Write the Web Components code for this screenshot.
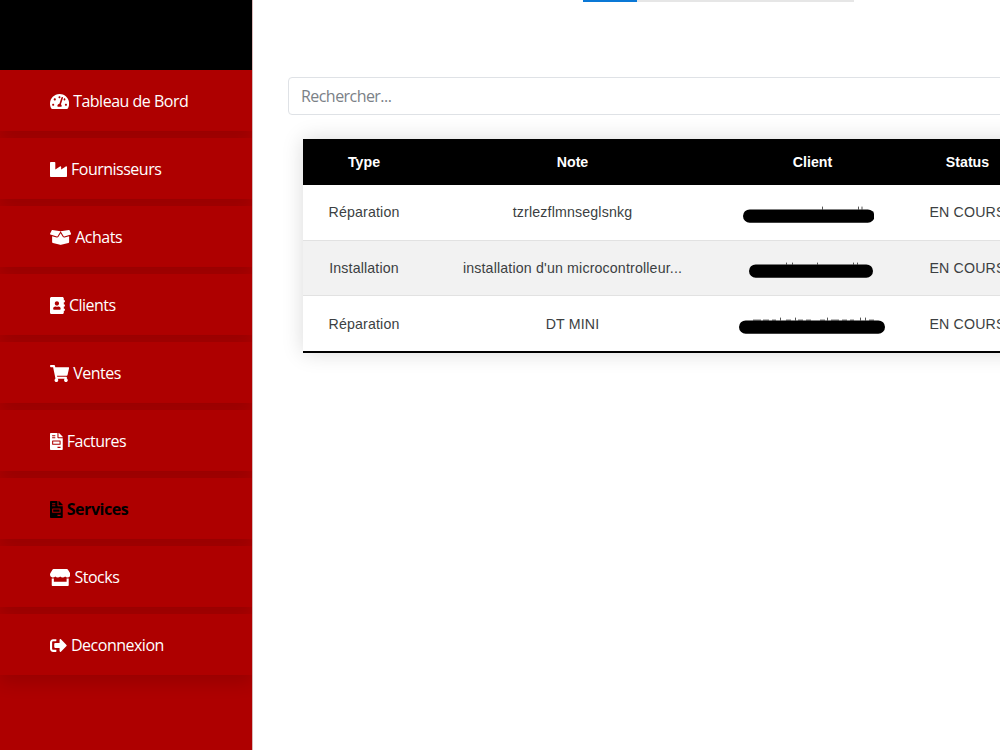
<!DOCTYPE html>
<html lang="fr">
<head>
<meta charset="utf-8">
<title>Services</title>
<style>
    html, body {
        margin: 0;
        height: 100%;
        overflow: hidden;
        background: #fff;
    }
</style>
</head>
<body>
<app-layout>
    <side-nav slot="sidebar">
        <nav-item icon="dashboard">Tableau de Bord</nav-item>
        <nav-item icon="industry">Fournisseurs</nav-item>
        <nav-item icon="box">Achats</nav-item>
        <nav-item icon="contacts">Clients</nav-item>
        <nav-item icon="cart">Ventes</nav-item>
        <nav-item icon="invoice">Factures</nav-item>
        <nav-item icon="invoice" active>Services</nav-item>
        <nav-item icon="store">Stocks</nav-item>
        <nav-item icon="logout">Deconnexion</nav-item>
    </side-nav>
    <tab-progress></tab-progress>
    <search-field placeholder="Rechercher..."></search-field>
    <service-table></service-table>
</app-layout>

<script>
const ICONS = {
    dashboard: [576, 'M288 32C128.94 32 0 160.94 0 320c0 52.8 14.25 102.26 39.06 144.8 5.61 9.62 16.3 15.2 27.44 15.2h443c11.14 0 21.83-5.58 27.44-15.2C561.75 422.26 576 372.8 576 320c0-159.06-128.94-288-288-288zm0 64c14.71 0 26.58 10.13 30.32 23.65-1.11 2.26-2.64 4.23-3.45 6.67l-9.22 27.67c-5.13 3.49-10.97 6.01-17.64 6.01-17.67 0-32-14.33-32-32S270.33 96 288 96zM96 384c-17.67 0-32-14.33-32-32s14.33-32 32-32 32 14.33 32 32-14.33 32-32 32zm48-160c-17.67 0-32-14.33-32-32s14.33-32 32-32 32 14.33 32 32-14.33 32-32 32zm246.77-72.41l-61.33 184C343.13 347.33 352 364.54 352 384c0 11.72-3.38 22.55-8.88 32H232.88c-5.5-9.45-8.88-20.28-8.88-32 0-33.94 26.5-61.43 59.9-63.59l61.34-184.01c4.17-12.56 17.73-19.45 30.36-15.17 12.57 4.19 19.35 17.79 15.17 30.36zm14.66 57.2l15.52-46.55c3.47-1.29 7.13-2.23 11.05-2.23 17.67 0 32 14.33 32 32s-14.33 32-32 32c-11.38-.01-20.89-6.28-26.57-15.22zM480 384c-17.67 0-32-14.33-32-32s14.33-32 32-32 32 14.33 32 32-14.33 32-32 32z'],
    industry: [512, 'M475.115 163.781L336 252.309v-68.28c0-18.916-20.931-30.399-36.885-20.248L160 252.309V56c0-13.255-10.745-24-24-24H24C10.745 32 0 42.745 0 56v400c0 13.255 10.745 24 24 24h464c13.255 0 24-10.745 24-24V184.029c0-18.917-20.931-30.399-36.885-20.248z'],
    box: [640, 'M425.7 256c-16.9 0-32.8-9-41.4-23.4L320 126l-64.2 106.6c-8.7 14.5-24.6 23.5-41.5 23.5-4.5 0-9-.6-13.3-1.9L64 215v178c0 14.7 10 27.5 24.2 31l216.2 54.1c10.2 2.5 20.9 2.5 31 0L551.8 424c14.2-3.6 24.2-16.4 24.2-31V215l-137 39.1c-4.3 1.3-8.8 1.9-13.3 1.9zm212.6-112.2L586.8 41c-3.1-6.2-9.8-9.8-16.7-8.9L320 64l91.7 152.1c3.8 6.3 11.4 9.3 18.5 7.3l197.9-56.5c9.9-2.9 14.7-13.9 10.1-23.1zM53.2 41L1.7 143.8c-4.6 9.2.3 20.2 10.1 23l197.9 56.5c7.1 2 14.7-1 18.5-7.3L320 64 69.8 32.1c-6.9-.8-13.5 2.7-16.6 8.9z'],
    contacts: [448, 'M436 160c6.6 0 12-5.4 12-12v-40c0-6.6-5.4-12-12-12h-20V48c0-26.5-21.5-48-48-48H48C21.5 0 0 21.5 0 48v416c0 26.5 21.5 48 48 48h320c26.5 0 48-21.5 48-48v-48h20c6.6 0 12-5.4 12-12v-40c0-6.6-5.4-12-12-12h-20v-64h20c6.6 0 12-5.4 12-12v-40c0-6.6-5.4-12-12-12h-20v-64h20zm-228-32c35.3 0 64 28.7 64 64s-28.7 64-64 64-64-28.7-64-64 28.7-64 64-64zm112 236.8c0 10.6-10 19.2-22.4 19.2H118.4C106 384 96 375.4 96 364.8v-19.2c0-31.8 30.1-57.6 67.2-57.6h5c12.3 5.1 25.7 8 39.8 8s27.6-2.9 39.8-8h5c37.1 0 67.2 25.8 67.2 57.6v19.2z'],
    cart: [576, 'M528.12 301.319l47.273-208C578.806 78.301 567.391 64 551.99 64H159.208l-9.166-44.81C147.758 8.021 137.93 0 126.529 0H24C10.745 0 0 10.745 0 24v16c0 13.255 10.745 24 24 24h69.883l70.248 343.435C147.325 417.1 136 435.222 136 456c0 30.928 25.072 56 56 56s56-25.072 56-56c0-15.674-6.447-29.835-16.824-40h209.647C430.447 426.165 424 440.326 424 456c0 30.928 25.072 56 56 56s56-25.072 56-56c0-22.172-12.888-41.332-31.579-50.405l5.517-24.276c3.413-15.018-8.002-29.319-23.403-29.319H218.117l-6.545-32h293.145c11.206 0 20.92-7.754 23.403-18.681z'],
    invoice: [384, 'M288 256H96v64h192v-64zm89-151L279.1 7c-4.5-4.5-10.6-7-17-7H256v128h128v-6.1c0-6.3-2.5-12.4-7-16.9zm-153 31V0H24C10.7 0 0 10.7 0 24v464c0 13.3 10.7 24 24 24h336c13.3 0 24-10.7 24-24V160H248c-13.2 0-24-10.8-24-24zM64 72c0-4.42 3.58-8 8-8h80c4.42 0 8 3.58 8 8v16c0 4.42-3.58 8-8 8H72c-4.42 0-8-3.58-8-8V72zm0 64c0-4.42 3.58-8 8-8h80c4.42 0 8 3.58 8 8v16c0 4.42-3.58 8-8 8H72c-4.42 0-8-3.58-8-8v-16zm256 304c0 4.42-3.58 8-8 8h-80c-4.42 0-8-3.58-8-8v-16c0-4.42 3.58-8 8-8h80c4.42 0 8 3.58 8 8v16zm0-200v96c0 8.84-7.16 16-16 16H80c-8.84 0-16-7.16-16-16v-96c0-8.84 7.16-16 16-16h224c8.84 0 16 7.16 16 16z'],
    store: [616, 'M602 118.6L537.1 15C531.3 5.7 521 0 510 0H106C95 0 84.7 5.7 78.9 15L14 118.6c-33.5 53.5-3.8 127.9 58.8 136.4 4.5.6 9.1.9 13.7.9 29.6 0 55.8-13 73.8-33.1 18 20.1 44.3 33.1 73.8 33.1 29.6 0 55.8-13 73.8-33.1 18 20.1 44.3 33.1 73.8 33.1 29.6 0 55.8-13 73.8-33.1 18.1 20.1 44.3 33.1 73.8 33.1 4.7 0 9.2-.3 13.7-.9 62.8-8.4 92.6-82.8 59-136.4zM529.5 288c-10 0-19.9-1.5-29.5-3.8V384H116v-99.8c-9.6 2.2-19.5 3.8-29.5 3.8-6 0-12.1-.4-18-1.2-5.6-.8-11.1-2.1-16.4-3.6V480c0 17.7 14.3 32 32 32h448c17.7 0 32-14.3 32-32V283.2c-5.4 1.6-10.8 2.9-16.4 3.6-6.1.8-12.1 1.2-18.2 1.2z'],
    logout: [512, 'M497 273L329 441c-15 15-41 4.5-41-17v-96H152c-13.3 0-24-10.7-24-24v-96c0-13.3 10.7-24 24-24h136V88c0-21.4 25.9-32 41-17l168 168c9.3 9.4 9.3 24.6 0 34zM192 436v-40c0-6.6-5.4-12-12-12H96c-17.7 0-32-14.3-32-32V160c0-17.7 14.3-32 32-32h84c6.6 0 12-5.4 12-12V76c0-6.6-5.4-12-12-12H96c-53 0-96 43-96 96v192c0 53 43 96 96 96h84c6.6 0 12-5.4 12-12z'],
};

class AppLayout extends HTMLElement {
    constructor() {
        super();
        this.attachShadow({ mode: 'open' }).innerHTML = `
            <style>
                :host {
                    display: flex;
                    width: 100%;
                    height: 100%;
                    overflow: hidden;
                }
                main {
                    flex: 1;
                    min-width: 0;
                    overflow: hidden;
                }
            </style>
            <slot name="sidebar"></slot>
            <main><slot></slot></main>
        `;
    }
}

class SideNav extends HTMLElement {
    constructor() {
        super();
        this.attachShadow({ mode: 'open' }).innerHTML = `
            <style>
                :host {
                    display: block;
                    box-sizing: border-box;
                    flex: 0 0 253px;
                    height: 100%;
                    overflow: hidden;
                    border-right: 1px solid #d9b9b9;
                    background: #ae0000;
                }
                header {
                    height: 70px;
                    background: #000;
                }
            </style>
            <header></header>
            <nav><slot></slot></nav>
        `;
    }
}

class NavItem extends HTMLElement {
    connectedCallback() {
        const [width, path] = ICONS[this.getAttribute('icon')];
        this.attachShadow({ mode: 'open' }).innerHTML = `
            <style>
                :host {
                    position: relative;
                    display: flex;
                    align-items: center;
                    gap: 4px;
                    box-sizing: border-box;
                    height: 61px;
                    margin-bottom: 7px;
                    padding: 1px 0 0 50px;
                    background: #ae0000;
                    box-shadow: 0 8px 16px rgba(0, 0, 0, .13);
                    color: #fff;
                    font: 16px/24px "Open Sans", sans-serif;
                    letter-spacing: -.5px;
                    white-space: nowrap;
                }
                :host([active]) {
                    color: #000;
                    font-weight: 700;
                    letter-spacing: -.45px;
                }
                svg {
                    flex: none;
                    height: 17px;
                    fill: currentColor;
                }
            </style>
            <svg viewBox="0 0 ${width} 512" width="${width / 512 * 17}"><path d="${path}"/></svg>
            <span><slot></slot></span>
        `;
    }
}

class TabProgress extends HTMLElement {
    constructor() {
        super();
        this.attachShadow({ mode: 'open' }).innerHTML = `
            <style>
                :host {
                    display: block;
                    width: 271px;
                    height: 1.6px;
                    margin-left: 330px;
                    background: #e6e6e6;
                }
                div {
                    width: 54px;
                    height: 100%;
                    background: #0a78d6;
                }
            </style>
            <div></div>
        `;
    }
}

class SearchField extends HTMLElement {
    connectedCallback() {
        this.attachShadow({ mode: 'open' }).innerHTML = `
            <style>
                :host {
                    display: block;
                    margin: 75.4px 0 0 35px;
                }
                input {
                    display: block;
                    box-sizing: border-box;
                    width: 760px;
                    height: 38px;
                    padding: 1px 12px 0;
                    border: 1px solid #dfe2e6;
                    border-radius: 4px;
                    outline: none;
                    font: 16px "Open Sans", sans-serif;
                    letter-spacing: -.55px;
                }
                input::placeholder {
                    color: #7b8187;
                    opacity: 1;
                }
            </style>
            <input type="text" placeholder="${this.getAttribute('placeholder')}">
        `;
    }
}

// Masked client name: a rounded bar, with the specks it leaves uncovered on top.
class MaskedName extends HTMLElement {
    connectedCallback() {
        const width = this.getAttribute('width');
        const specks = (this.getAttribute('specks') || '').split(' ').filter(Boolean).map((speck) => {
            const [x, w, h] = speck.split(',');
            return `<rect x="${x}" y="${4.6 - h}" width="${w}" height="${h}"/>`;
        }).join('');
        this.attachShadow({ mode: 'open' }).innerHTML = `
            <style>
                :host {
                    display: block;
                    margin: 3px 0 0 var(--shift, 0);
                }
                svg { display: block; }
            </style>
            <svg width="${width}" height="18">
                <g fill="#555">${specks}</g>
                <rect y="4.4" width="${width}" height="13.4" rx="6.7"/>
            </svg>
        `;
    }
}

class ServiceTable extends HTMLElement {
    constructor() {
        super();
        this.attachShadow({ mode: 'open' }).innerHTML = `
            <style>
                :host {
                    display: block;
                    width: 900px;
                    margin: 24px 0 0 50px;
                    box-shadow: 0 0 20px rgba(0, 0, 0, .15);
                    border-bottom: 2px solid #000;
                    color: #3c3f42;
                    font: 14.2px/20px "Liberation Sans", Arial, sans-serif;
                    letter-spacing: .16px;
                }
                .row {
                    display: grid;
                    grid-template-columns: 122px 295px 185px 125px 1fr;
                    align-items: center;
                    justify-items: center;
                    box-sizing: border-box;
                    height: 55.6px;
                    border-bottom: 1px solid #e2e2e2;
                    background: #fff;
                    white-space: nowrap;
                }
                .row:nth-child(odd) { background: #f2f2f2; }
                .row:last-child {
                    height: 54.8px;
                    border: 0;
                    background: #fff;
                }
                .row.head {
                    height: 46px;
                    border: 0;
                    background: #000;
                    color: #fff;
                    font-weight: bold;
                    letter-spacing: 0;
                }
            </style>
            <div>
                <div class="row head"><span>Type</span><span>Note</span><span>Client</span><span>Status</span></div>
                <div class="row"><span>Réparation</span><span>tzrlezflmnseglsnkg</span><masked-name width="131.5" specks="79,1,3 115,1,3 118.5,1,3" style="--shift: -8px"></masked-name><span>EN COURS</span></div>
                <div class="row"><span>Installation</span><span>installation d'un microcontrolleur...</span><masked-name width="124" specks="37,1,2 43,1,2 68,1,2 104,1,2 108,1,2" style="--shift: -3px"></masked-name><span>EN COURS</span></div>
                <div class="row"><span>Réparation</span><span>DT MINI</span><masked-name width="146" specks="14,8,1 24,6,1 33,4,1 41,1,3 47,5,1 56,1,3 59,5,1 67,5,1 81,5,1 88,1,3 92,8,1 103,5,1 111,4,1 121,1,3 126,1,3 130,5,1" style="--shift: -2px"></masked-name><span>EN COURS</span></div>
            </div>
        `;
    }
}

customElements.define('app-layout', AppLayout);
customElements.define('side-nav', SideNav);
customElements.define('nav-item', NavItem);
customElements.define('tab-progress', TabProgress);
customElements.define('search-field', SearchField);
customElements.define('masked-name', MaskedName);
customElements.define('service-table', ServiceTable);
</script>
</body>
</html>
